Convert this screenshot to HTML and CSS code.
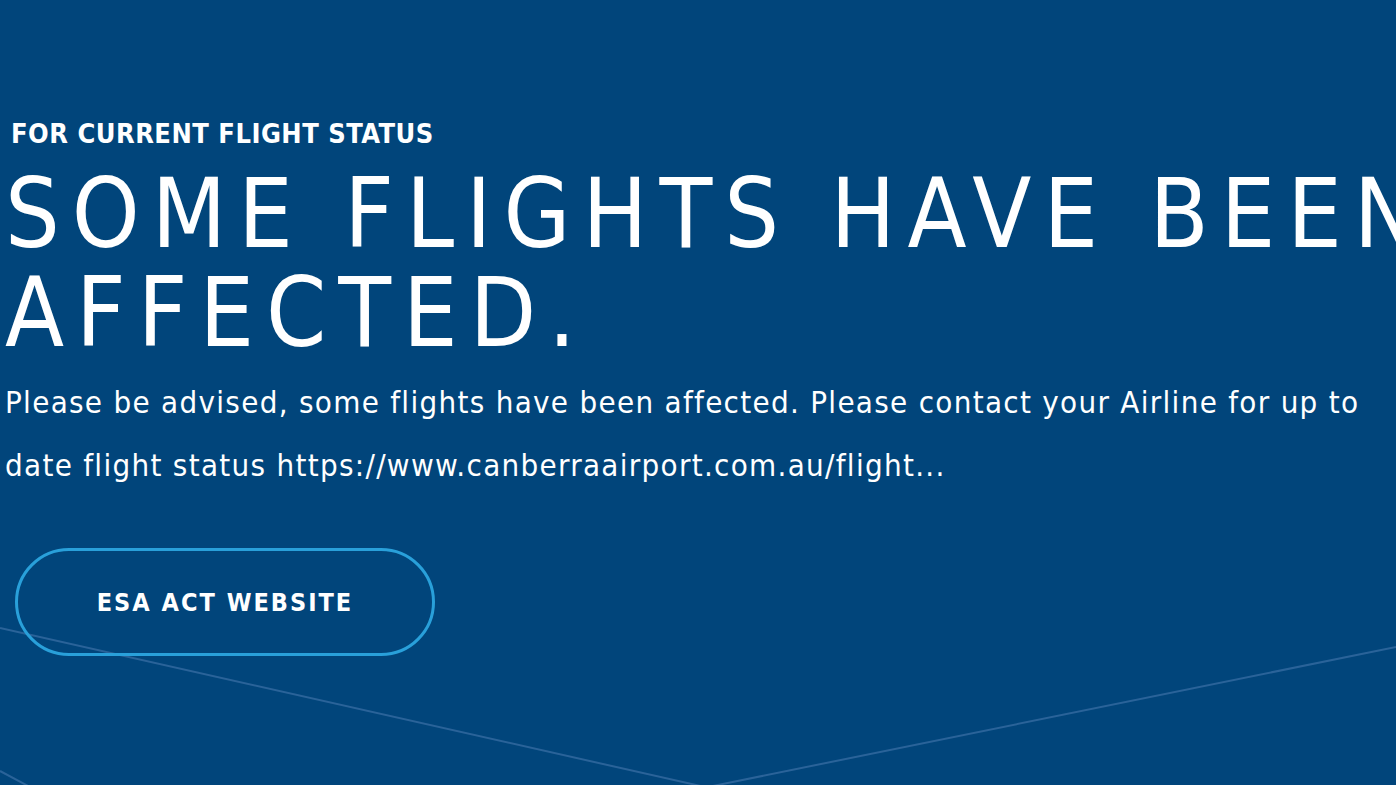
FILE: index.html
```html
<!DOCTYPE html>
<html lang="en">
<head>
    <meta charset="UTF-8">
    <meta name="viewport" content="width=device-width, initial-scale=1.0">
    <title>Canberra Airport - Flight Status</title>
    <link rel="stylesheet" href="styles.css">
</head>
<body>
    <div class="hero">
        <!-- background flight path lines -->
        <svg class="hero-lines" width="1396" height="785" viewBox="0 0 1396 785">
            <line x1="0" y1="628" x2="705" y2="787" />
            <line x1="708" y1="787" x2="1396" y2="647" />
            <line x1="0" y1="771" x2="30" y2="787" />
        </svg>

        <div class="notice">
            <h4 class="eyebrow">FOR CURRENT FLIGHT STATUS</h4>
            <h1 class="headline">SOME FLIGHTS HAVE BEEN<br>AFFECTED.</h1>
            <p class="message">Please be advised, some flights have been affected. Please contact your Airline for up to date flight status https://www.canberraairport.com.au/flight...</p>
            <a class="btn-outline" href="#">ESA ACT WEBSITE</a>
        </div>
    </div>
</body>
</html>
```

FILE: styles.css
```css
html, body {
    margin: 0;
    padding: 0;
}
body {
    background-color: #01457b;
    color: #ffffff;
    font-family: "DejaVu Sans Condensed", "DejaVu Sans", sans-serif;
    overflow: hidden;
}
.hero {
    position: relative;
    width: 1396px;
    height: 785px;
    overflow: hidden;
}
.hero-lines {
    position: absolute;
    left: 0;
    top: 0;
}
.hero-lines line {
    stroke: #2a6399;
    stroke-width: 2;
}
.notice {
    position: relative;
    padding: 117px 0 0 5px;
}
.eyebrow {
    margin: 0 0 0 6px;
    font-size: 27px;
    font-weight: bold;
    line-height: 34px;
    letter-spacing: 0.5px;
}
.headline {
    margin: 14px 0 0 0;
    font-size: 96px;
    font-weight: normal;
    line-height: 99px;
    letter-spacing: 12px;
    white-space: nowrap;
}
.message {
    margin: 8px 0 0 0;
    width: 1380px;
    font-size: 31px;
    line-height: 63px;
    letter-spacing: 1.3px;
}
.btn-outline {
    display: flex;
    align-items: center;
    justify-content: center;
    box-sizing: border-box;
    width: 420px;
    height: 108px;
    margin: 51px 0 0 10px;
    border: 3px solid #29a0da;
    border-radius: 54px;
    color: #ffffff;
    text-decoration: none;
    font-size: 25px;
    font-weight: bold;
    letter-spacing: 2px;
}
```
